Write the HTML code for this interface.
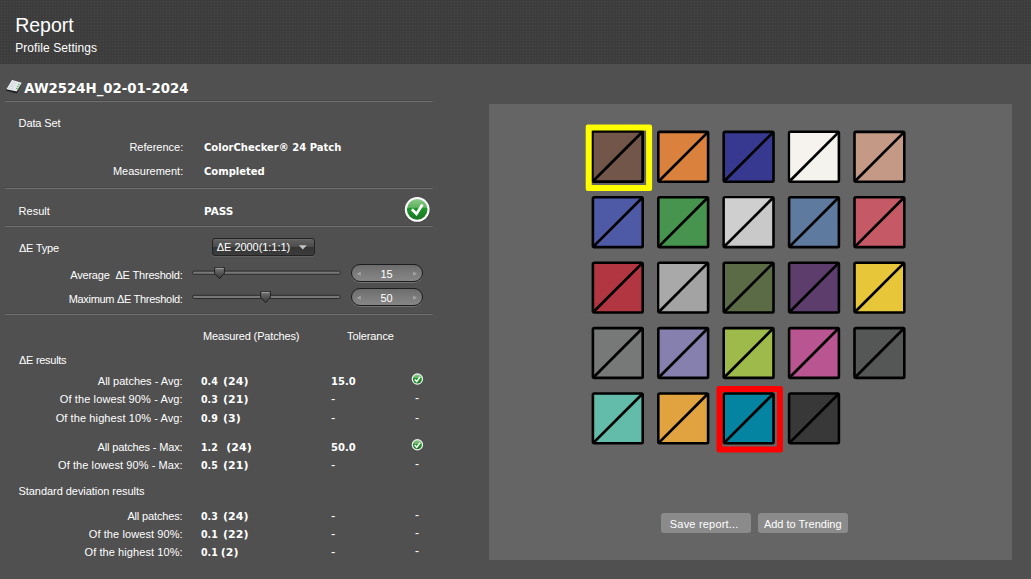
<!DOCTYPE html>
<html><head><meta charset="utf-8"><title>Report</title>
<style>
html,body{margin:0;padding:0;}
body{width:1031px;height:579px;overflow:hidden;background:#505050;position:relative;font-family:'Liberation Sans',sans-serif;font-size:11px;color:#fff;}
.hdr{position:absolute;left:0;top:0;width:1031px;height:64px;background-color:#3c3c3c;background-image:radial-gradient(circle at 1.5px 1.5px,#464646 0.5px,transparent 1.1px);background-size:3px 3px;}
.t{position:absolute;white-space:pre;line-height:20px;height:20px;}
.b{font-family:'DejaVu Sans','Liberation Sans',sans-serif;font-weight:bold;transform-origin:0 50%;}
.sep{position:absolute;left:5px;width:428px;height:2px;background:linear-gradient(#474747 0,#474747 50%,#707070 50%,#707070 100%);border-radius:1px;}
.panel{position:absolute;left:489px;top:104px;width:523px;height:456px;background:#656565;}
.btn{position:absolute;top:513px;height:20px;background:#8b8b8b;border-radius:3px;}
.dd{position:absolute;left:212px;top:238px;width:103px;height:18px;box-sizing:border-box;border:1px solid #222;border-radius:3px;background:linear-gradient(#6a6a6a 0,#5e5e5e 8%,#4d4d4d 47%,#353535 53%,#3c3c3c 100%);box-shadow:0 1px 0 rgba(255,255,255,0.10);}
.spin{position:absolute;left:351px;width:72px;height:17.6px;box-sizing:border-box;border:1.3px solid #1d1d1d;border-top-width:1.8px;border-radius:9px;background:linear-gradient(#6c6c6c,#787878 40%,#868686);box-shadow:0 1px 0 rgba(255,255,255,0.2);}
svg{position:absolute;left:0;top:0;}
</style></head><body>
<div class="hdr"></div>
<div class="sep" style="top:100px"></div>
<div class="sep" style="top:187px"></div>
<div class="sep" style="top:225px"></div>
<div class="sep" style="top:313px"></div>
<div class="panel"></div>
<div class="btn" style="left:661px;width:90px"></div>
<div class="btn" style="left:758px;width:90px"></div>
<div class="dd"></div>
<div class="spin" style="top:264.1px"></div>
<div class="spin" style="top:288.1px"></div>
<svg width="1031" height="579" viewBox="0 0 1031 579">
<defs>
<linearGradient id="gg" x1="0" y1="0" x2="0" y2="1"><stop offset="0" stop-color="#8cc98a"/><stop offset="0.40" stop-color="#5fb260"/><stop offset="0.44" stop-color="#1f962b"/><stop offset="1" stop-color="#1c7724"/></linearGradient>
<linearGradient id="th" x1="0" y1="0" x2="0" y2="1"><stop offset="0" stop-color="#7c7c7c"/><stop offset="0.45" stop-color="#585858"/><stop offset="1" stop-color="#3a3a3a"/></linearGradient>
</defs>
<g transform="translate(591.6,130.6)"><rect x="0.7" y="0.7" width="50.4" height="50.4" rx="1.2" fill="#72564a" stroke="#000" stroke-width="2.8"/><path d="M1.6 50.4L50.4 1.6" stroke="#000" stroke-width="2.7"/></g>
<g transform="translate(657.0,130.6)"><rect x="1.3" y="1.3" width="49.8" height="49.8" rx="1.2" fill="#d9813d" stroke="#000" stroke-width="2.6"/><path d="M2 50.4L50.4 2" stroke="#000" stroke-width="2.7"/></g>
<g transform="translate(722.4,130.6)"><rect x="1.3" y="1.3" width="49.8" height="49.8" rx="1.2" fill="#36398f" stroke="#000" stroke-width="2.6"/><path d="M2 50.4L50.4 2" stroke="#000" stroke-width="2.7"/></g>
<g transform="translate(787.8,130.6)"><rect x="1.3" y="1.3" width="49.8" height="49.8" rx="1.2" fill="#f4f3ee" stroke="#000" stroke-width="2.6"/><path d="M2.5 2.5H49.5L2.5 49.5Z" fill="#f6f3ee"/><path d="M2 50.4L50.4 2" stroke="#000" stroke-width="2.7"/></g>
<g transform="translate(853.2,130.6)"><rect x="1.3" y="1.3" width="49.8" height="49.8" rx="1.2" fill="#c49986" stroke="#000" stroke-width="2.6"/><path d="M2 50.4L50.4 2" stroke="#000" stroke-width="2.7"/></g>
<g transform="translate(591.6,196.0)"><rect x="1.3" y="1.3" width="49.8" height="49.8" rx="1.2" fill="#4e5aa5" stroke="#000" stroke-width="2.6"/><path d="M2 50.4L50.4 2" stroke="#000" stroke-width="2.7"/></g>
<g transform="translate(657.0,196.0)"><rect x="1.3" y="1.3" width="49.8" height="49.8" rx="1.2" fill="#46944e" stroke="#000" stroke-width="2.6"/><path d="M2 50.4L50.4 2" stroke="#000" stroke-width="2.7"/></g>
<g transform="translate(722.4,196.0)"><rect x="1.3" y="1.3" width="49.8" height="49.8" rx="1.2" fill="#c9c9c9" stroke="#000" stroke-width="2.6"/><path d="M2.5 2.5H49.5L2.5 49.5Z" fill="#cfcfcf"/><path d="M2 50.4L50.4 2" stroke="#000" stroke-width="2.7"/></g>
<g transform="translate(787.8,196.0)"><rect x="1.3" y="1.3" width="49.8" height="49.8" rx="1.2" fill="#5f7a9f" stroke="#000" stroke-width="2.6"/><path d="M2 50.4L50.4 2" stroke="#000" stroke-width="2.7"/></g>
<g transform="translate(853.2,196.0)"><rect x="1.3" y="1.3" width="49.8" height="49.8" rx="1.2" fill="#c55a66" stroke="#000" stroke-width="2.6"/><path d="M2 50.4L50.4 2" stroke="#000" stroke-width="2.7"/></g>
<g transform="translate(591.6,261.4)"><rect x="1.3" y="1.3" width="49.8" height="49.8" rx="1.2" fill="#b23641" stroke="#000" stroke-width="2.6"/><path d="M2 50.4L50.4 2" stroke="#000" stroke-width="2.7"/></g>
<g transform="translate(657.0,261.4)"><rect x="1.3" y="1.3" width="49.8" height="49.8" rx="1.2" fill="#a3a3a3" stroke="#000" stroke-width="2.6"/><path d="M2.5 2.5H49.5L2.5 49.5Z" fill="#a9a9a9"/><path d="M2 50.4L50.4 2" stroke="#000" stroke-width="2.7"/></g>
<g transform="translate(722.4,261.4)"><rect x="1.3" y="1.3" width="49.8" height="49.8" rx="1.2" fill="#5a6b45" stroke="#000" stroke-width="2.6"/><path d="M2 50.4L50.4 2" stroke="#000" stroke-width="2.7"/></g>
<g transform="translate(787.8,261.4)"><rect x="1.3" y="1.3" width="49.8" height="49.8" rx="1.2" fill="#5c3d6c" stroke="#000" stroke-width="2.6"/><path d="M2 50.4L50.4 2" stroke="#000" stroke-width="2.7"/></g>
<g transform="translate(853.2,261.4)"><rect x="1.3" y="1.3" width="49.8" height="49.8" rx="1.2" fill="#e8c63a" stroke="#000" stroke-width="2.6"/><path d="M2 50.4L50.4 2" stroke="#000" stroke-width="2.7"/></g>
<g transform="translate(591.6,326.8)"><rect x="1.3" y="1.3" width="49.8" height="49.8" rx="1.2" fill="#777978" stroke="#000" stroke-width="2.6"/><path d="M2 50.4L50.4 2" stroke="#000" stroke-width="2.7"/></g>
<g transform="translate(657.0,326.8)"><rect x="1.3" y="1.3" width="49.8" height="49.8" rx="1.2" fill="#8580ae" stroke="#000" stroke-width="2.6"/><path d="M2 50.4L50.4 2" stroke="#000" stroke-width="2.7"/></g>
<g transform="translate(722.4,326.8)"><rect x="1.3" y="1.3" width="49.8" height="49.8" rx="1.2" fill="#9eba4b" stroke="#000" stroke-width="2.6"/><path d="M2 50.4L50.4 2" stroke="#000" stroke-width="2.7"/></g>
<g transform="translate(787.8,326.8)"><rect x="1.3" y="1.3" width="49.8" height="49.8" rx="1.2" fill="#b95591" stroke="#000" stroke-width="2.6"/><path d="M2 50.4L50.4 2" stroke="#000" stroke-width="2.7"/></g>
<g transform="translate(853.2,326.8)"><rect x="1.3" y="1.3" width="49.8" height="49.8" rx="1.2" fill="#555756" stroke="#000" stroke-width="2.6"/><path d="M2 50.4L50.4 2" stroke="#000" stroke-width="2.7"/></g>
<g transform="translate(591.6,392.2)"><rect x="1.3" y="1.3" width="49.8" height="49.8" rx="1.2" fill="#63bba9" stroke="#000" stroke-width="2.6"/><path d="M2 50.4L50.4 2" stroke="#000" stroke-width="2.7"/></g>
<g transform="translate(657.0,392.2)"><rect x="1.3" y="1.3" width="49.8" height="49.8" rx="1.2" fill="#e0a340" stroke="#000" stroke-width="2.6"/><path d="M2 50.4L50.4 2" stroke="#000" stroke-width="2.7"/></g>
<g transform="translate(722.4,392.2)"><rect x="1.3" y="1.3" width="49.8" height="49.8" rx="1.2" fill="#0584a2" stroke="#000" stroke-width="2.6"/><path d="M2 50.4L50.4 2" stroke="#000" stroke-width="2.7"/></g>
<g transform="translate(787.8,392.2)"><rect x="1.3" y="1.3" width="49.8" height="49.8" rx="1.2" fill="#383838" stroke="#000" stroke-width="2.6"/><path d="M2 50.4L50.4 2" stroke="#000" stroke-width="2.7"/></g>
<path d="M587.9 124.5h62.0a2.2 2.2 0 0 1 2.2 2.2v62.0a2.2 2.2 0 0 1 -2.2 2.2h-62.0a2.2 2.2 0 0 1 -2.2 -2.2v-62.0a2.2 2.2 0 0 1 2.2 -2.2zM591.7 130.5v54.4h54.4v-54.4z" fill="#ffff00" fill-rule="evenodd"/>
<path d="M718.7 386.1h62.0a2.2 2.2 0 0 1 2.2 2.2v62.0a2.2 2.2 0 0 1 -2.2 2.2h-62.0a2.2 2.2 0 0 1 -2.2 -2.2v-62.0a2.2 2.2 0 0 1 2.2 -2.2zM722.5 392.1v54.4h54.4v-54.4z" fill="#ff0000" fill-rule="evenodd"/>
<!-- data set icon -->
<g>
<path d="M11.6 79.6L22 82.7L16.9 93.4L5.6 90.4Z" fill="#1c1c1c"/>
<path d="M11.9 79.7L21.9 82.7L16.7 91.6L6.3 89.2Z" fill="#e6e9eb"/>
<path d="M18.3 84.3l1.3 0.4M17.2 86.2l1.3 0.4M16.1 88.2l1.3 0.4" stroke="#45b34a" stroke-width="1.2"/>
<path d="M11.6 82l4.6 1.4M10.6 83.9l4.6 1.4M9.6 85.8l4.6 1.4M8.6 87.7l4.6 1.4" stroke="#cfd2d4" stroke-width="0.7"/>
</g>
<!-- big check -->
<circle cx="417.2" cy="209.8" r="12.9" fill="#3a3a3a" opacity="0.55"/>
<circle cx="417.2" cy="209.4" r="12.4" fill="#fff"/>
<circle cx="417.2" cy="209.4" r="10.3" fill="url(#gg)"/>
<path d="M410.9 210.2l1.9-1.9l3.5 3.4l5-7.9l2.3 1.5l-6.9 10.6z" fill="#fff"/>
<!-- small checks -->
<g id="sc"><circle cx="417.4" cy="379" r="5.7" fill="#f2f2f2"/><circle cx="417.4" cy="379" r="4.5" fill="url(#gg)"/><path d="M414.7 379.4l2 2.2l3.3-4.6" fill="none" stroke="#fff" stroke-width="1.5" stroke-linejoin="miter"/></g>
<g transform="translate(0,65.7)"><circle cx="417.4" cy="379" r="5.7" fill="#f2f2f2"/><circle cx="417.4" cy="379" r="4.5" fill="url(#gg)"/><path d="M414.7 379.4l2 2.2l3.3-4.6" fill="none" stroke="#fff" stroke-width="1.5" stroke-linejoin="miter"/></g>
<!-- dropdown arrow -->
<path d="M298.8 245.3h8l-4 4.1z" fill="#c4c4c4"/>
<!-- sliders -->
<g id="trk"><rect x="192.6" y="271.1" width="147.6" height="3.2" rx="1.6" fill="#787878" stroke="#2b2b2b" stroke-width="1"/></g>
<rect x="192.6" y="295.3" width="147.6" height="3.2" rx="1.6" fill="#787878" stroke="#2b2b2b" stroke-width="1"/>
<g id="thumb"><path d="M214.6 267.5h9.8v5.7l-4.9 5.5l-4.9-5.5z" fill="url(#th)" stroke="#202020" stroke-width="1" stroke-linejoin="round"/><path d="M215.4 268.3h8.2" stroke="#a8a8a8" stroke-width="0.9"/></g>
<g transform="translate(46,24)"><path d="M214.6 267.5h9.8v5.7l-4.9 5.5l-4.9-5.5z" fill="url(#th)" stroke="#202020" stroke-width="1" stroke-linejoin="round"/><path d="M215.4 268.3h8.2" stroke="#a8a8a8" stroke-width="0.9"/></g>
<!-- spinner arrows -->
<path id="spa" d="M360.8 271.5v4.4l-3.9-2.2zM413.1 271.5v4.4l3.9-2.2z" fill="#a2a2a2"/>
<path d="M360.8 295.5v4.4l-3.9-2.2zM413.1 295.5v4.4l3.9-2.2z" fill="#a2a2a2"/>
</svg>
<div class="t" style="top:15.40px;left:15.2px;font-size:19.5px;">Report</div>
<div class="t" style="top:38.00px;left:15.2px;font-size:12px;letter-spacing:0.08px;">Profile Settings</div>
<div class="t b" style="top:78.00px;line-height:21px;height:21px;left:24.2px;font-size:13.3px;">AW2524H_02-01-2024</div>
<div class="t" style="top:113.00px;left:18.6px;letter-spacing:-0.12px;">Data Set</div>
<div class="t" style="top:137.00px;right:847.8px;">Reference:</div>
<div class="t" style="top:161.00px;right:847.8px;">Measurement:</div>
<div class="t b" style="top:137.00px;line-height:21px;height:21px;left:204px;font-size:11px;transform:scaleX(0.91);">ColorChecker® 24 Patch</div>
<div class="t b" style="top:161.00px;line-height:21px;height:21px;left:204px;font-size:11px;transform:scaleX(0.91);">Completed</div>
<div class="t" style="top:201.00px;left:18.6px;">Result</div>
<div class="t b" style="top:201.00px;line-height:21px;height:21px;left:204px;font-size:11px;transform:scaleX(0.95);">PASS</div>
<div class="t" style="top:238.00px;left:19px;letter-spacing:-0.23px;">ΔE Type</div>
<div class="t" style="top:265.00px;right:848.4px;letter-spacing:-0.18px;">Average&nbsp; ΔE Threshold:</div>
<div class="t" style="top:289.00px;right:848.4px;letter-spacing:-0.3px;">Maximum ΔE Threshold:</div>
<div class="t" style="top:237.30px;left:216.8px;letter-spacing:-0.05px;">ΔE 2000(1:1:1)</div>
<div class="t" style="top:263.80px;left:336.5px;width:100px;text-align:center;">15</div>
<div class="t" style="top:287.80px;left:336.5px;width:100px;text-align:center;">50</div>
<div class="t" style="top:326.00px;left:203px;letter-spacing:-0.15px;">Measured (Patches)</div>
<div class="t" style="top:326.00px;left:347px;letter-spacing:-0.1px;">Tolerance</div>
<div class="t" style="top:350.00px;left:19px;letter-spacing:-0.28px;">ΔE results</div>
<div class="t" style="top:371.00px;right:848.4px;">All patches - Avg:</div>
<div class="t b" style="top:371.00px;line-height:21px;height:21px;left:200.7px;font-size:11px;transform:scaleX(0.86);">0.4</div>
<div class="t b" style="top:371.00px;line-height:21px;height:21px;left:223.1px;font-size:11px;">(24)</div>
<div class="t b" style="top:371.00px;line-height:21px;height:21px;left:330.9px;font-size:11px;transform:scaleX(0.91);">15.0</div>
<div class="t" style="top:389.00px;right:848.29px;letter-spacing:0.11px;">Of the lowest 90% - Avg:</div>
<div class="t b" style="top:389.00px;line-height:21px;height:21px;left:200.7px;font-size:11px;transform:scaleX(0.86);">0.3</div>
<div class="t b" style="top:389.00px;line-height:21px;height:21px;left:223.1px;font-size:11px;">(21)</div>
<div class="t" style="top:388.00px;line-height:21px;height:21px;left:331px;font-size:13px;">-</div>
<div class="t" style="top:388.00px;left:415.1px;font-size:12px;">-</div>
<div class="t" style="top:408.00px;right:848.3px;letter-spacing:0.1px;">Of the highest 10% - Avg:</div>
<div class="t b" style="top:408.00px;line-height:21px;height:21px;left:200.7px;font-size:11px;transform:scaleX(0.86);">0.9</div>
<div class="t b" style="top:408.00px;line-height:21px;height:21px;left:223.1px;font-size:11px;">(3)</div>
<div class="t" style="top:407.00px;line-height:21px;height:21px;left:331px;font-size:13px;">-</div>
<div class="t" style="top:408.00px;left:415.1px;font-size:12px;">-</div>
<div class="t" style="top:437.00px;right:848.54px;letter-spacing:-0.14px;">All patches - Max:</div>
<div class="t b" style="top:437.00px;line-height:21px;height:21px;left:200.7px;font-size:11px;transform:scaleX(0.86);">1.2</div>
<div class="t b" style="top:437.00px;line-height:21px;height:21px;left:226.29999999999998px;font-size:11px;">(24)</div>
<div class="t b" style="top:437.00px;line-height:21px;height:21px;left:330.9px;font-size:11px;transform:scaleX(0.91);">50.0</div>
<div class="t" style="top:455.00px;right:848.33px;letter-spacing:0.07px;">Of the lowest 90% - Max:</div>
<div class="t b" style="top:455.00px;line-height:21px;height:21px;left:200.7px;font-size:11px;transform:scaleX(0.86);">0.5</div>
<div class="t b" style="top:455.00px;line-height:21px;height:21px;left:223.1px;font-size:11px;">(21)</div>
<div class="t" style="top:454.00px;line-height:21px;height:21px;left:331px;font-size:13px;">-</div>
<div class="t" style="top:454.00px;left:415.1px;font-size:12px;">-</div>
<div class="t" style="top:506.00px;right:848.55px;letter-spacing:-0.15px;">All patches:</div>
<div class="t b" style="top:506.00px;line-height:21px;height:21px;left:200.7px;font-size:11px;transform:scaleX(0.86);">0.3</div>
<div class="t b" style="top:506.00px;line-height:21px;height:21px;left:223.1px;font-size:11px;">(24)</div>
<div class="t" style="top:505.00px;line-height:21px;height:21px;left:331px;font-size:13px;">-</div>
<div class="t" style="top:505.00px;left:415.1px;font-size:12px;">-</div>
<div class="t" style="top:524.00px;right:848.31px;letter-spacing:0.09px;">Of the lowest 90%:</div>
<div class="t b" style="top:524.00px;line-height:21px;height:21px;left:200.7px;font-size:11px;transform:scaleX(0.86);">0.1</div>
<div class="t b" style="top:524.00px;line-height:21px;height:21px;left:223.1px;font-size:11px;">(22)</div>
<div class="t" style="top:523.00px;line-height:21px;height:21px;left:331px;font-size:13px;">-</div>
<div class="t" style="top:523.00px;left:415.1px;font-size:12px;">-</div>
<div class="t" style="top:542.00px;right:848.3199999999999px;letter-spacing:0.08px;">Of the highest 10%:</div>
<div class="t b" style="top:542.00px;line-height:21px;height:21px;left:200.7px;font-size:11px;transform:scaleX(0.86);">0.1</div>
<div class="t b" style="top:542.00px;line-height:21px;height:21px;left:220.79999999999998px;font-size:11px;">(2)</div>
<div class="t" style="top:541.00px;line-height:21px;height:21px;left:331px;font-size:13px;">-</div>
<div class="t" style="top:541.00px;left:415.1px;font-size:12px;">-</div>
<div class="t" style="top:481.00px;left:18.5px;letter-spacing:-0.05px;">Standard deviation results</div>
<div class="t" style="top:514.00px;left:669.8px;letter-spacing:0.2px;">Save report...</div>
<div class="t" style="top:514.00px;left:763.9px;">Add to Trending</div>
</body></html>
